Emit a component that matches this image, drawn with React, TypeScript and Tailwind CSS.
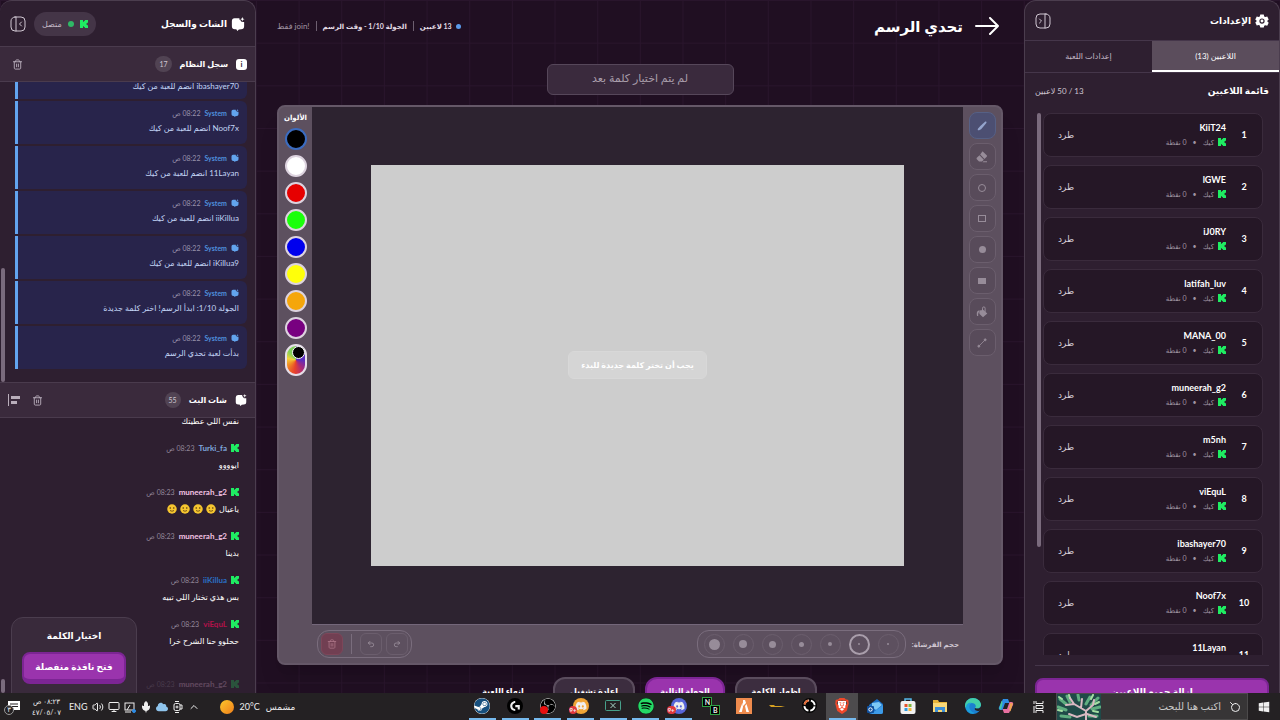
import { useState } from "react";
import type { ReactNode } from "react";
import {
  LuChevronUp,
  LuMic,
  LuMonitor,
  LuSearch,
  LuTrash2,
  LuUndo2,
  LuRedo2,
  LuVolume2,
} from "react-icons/lu";
import { FaWindows, FaSteam, FaSpotify, FaDiscord, FaCloud } from "react-icons/fa";
import { SiBrave, SiLogitechg, SiObsstudio } from "react-icons/si";

const players = [
  "KiiT24",
  "lGWE",
  "iJ0RY",
  "latifah_luv",
  "MANA_00",
  "muneerah_g2",
  "m5nh",
  "viEquL",
  "ibashayer70",
  "Noof7x",
  "11Layan",
];

const systemLog = [
  "Noof7x انضم للعبة من كيك",
  "11Layan انضم للعبة من كيك",
  "iiKillua انضم للعبة من كيك",
  "iKillua9 انضم للعبة من كيك",
  "الجولة 1/10: ابدأ الرسم! اختر كلمة جديدة",
  "بدأت لعبة تحدي الرسم",
];

const chat = [
  { user: "Turki_fa", color: "text-[#7ea6dd]", text: "ايوووو", smiles: 0 },
  { user: "muneerah_g2", color: "text-[#f3c3e3]", text: "ياعيال", smiles: 4 },
  { user: "muneerah_g2", color: "text-[#f3c3e3]", text: "بدينا", smiles: 0 },
  { user: "iiKillua", color: "text-[#2a6fc4]", text: "بس هذي تختار اللي تبيه", smiles: 0 },
  { user: "viEquL", color: "text-[#b3124a]", text: "ححلوو حنا الشرح خرا", smiles: 0 },
];

const colors = [
  { name: "أسود", bg: "bg-black" },
  { name: "أبيض", bg: "bg-white" },
  { name: "أحمر", bg: "bg-[#e60000]" },
  { name: "أخضر", bg: "bg-[#1aff0a]" },
  { name: "أزرق", bg: "bg-[#0000ee]" },
  { name: "أصفر", bg: "bg-[#ffff0a]" },
  { name: "برتقالي", bg: "bg-[#f5a60a]" },
  { name: "بنفسجي", bg: "bg-[#780080]" },
];

const brushSizes = [
  "size-[2px]",
  "size-[2px]",
  "size-1",
  "size-[5px]",
  "size-[7px]",
  "size-2",
  "size-[11px]",
];

function KickIcon({ className = "size-2" }: { className?: string }) {
  return (
    <svg viewBox="0 0 9 9" className={`shrink-0 fill-[#1fec62] ${className}`} aria-hidden="true">
      <path d="M0 0h3.400v2h1V1h1V0H9v3H8v1H7v1h1v1h1v3H5.400V8h-1V7h-1v2H0z" />
    </svg>
  );
}

function ChatIcon({ className }: { className?: string }) {
  return (
    <svg viewBox="0 0 24 24" className={`shrink-0 ${className}`} fill="currentColor" aria-hidden="true">
      <path d="M6 2h8.500c-.5 2 .3 3 1.700 3.300C16.500 7.500 18 9 22.500 8.500V16a5 5 0 0 1-5 5l-4 .5L11 24l-2-3H6.500a5 5 0 0 1-5-5V7A5 5 0 0 1 6 2z" />
      <path d="M19.500 0l1 2.700 2.700 1-2.700 1-1 2.700-1-2.700-2.700-1 2.700-1z" />
    </svg>
  );
}

function PanelIcon({ flip = false }: { flip?: boolean }) {
  return (
    <svg
      viewBox="0 0 16 16"
      className={flip ? "size-4 -scale-x-100" : "size-4"}
      fill="none"
      stroke="currentColor"
      strokeLinecap="round"
      strokeLinejoin="round"
      aria-hidden="true"
    >
      <rect x="1" y="1" width="14" height="14" rx="4" />
      <path d="M6 1v14M11.500 6l-2 2 2 2" />
    </svg>
  );
}

function Smile() {
  return (
    <svg viewBox="0 0 20 20" className="size-[10px]" role="img" aria-label="ابتسامة">
      <circle cx="10" cy="10" r="9.500" fill="#f6c62f" />
      <circle cx="6.500" cy="8" r="1.600" fill="#5b3c10" />
      <circle cx="13.500" cy="8" r="1.600" fill="#5b3c10" />
      <path d="M6 13q4 3 8 0" stroke="#5b3c10" strokeWidth="1.600" fill="none" />
    </svg>
  );
}

function SettingsPanel() {
  const [tab, setTab] = useState("players");
  const tabClass = (id: string) =>
    tab === id
      ? "flex-1 border-b-2 border-white bg-[#5b4d5c] text-white"
      : "flex-1 border-b-2 border-transparent text-[#c3b8c5]";

  return (
    <aside className="flex w-64 shrink-0 flex-col rounded-t-xl border-x border-t border-[#4b3d4e] bg-[#2e1f30]">
      <header className="flex h-10 shrink-0 items-center justify-between border-b border-[#45364a] px-2.5">
        <h2 className="flex items-center gap-1 text-[9px] font-bold">
          <svg viewBox="0 0 24 24" className="size-3.5" aria-hidden="true">
            <path
              d="M9 1h6l.8 3.300 1.700 1L21 4.300l2.500 5-2.300 2.200v1.500l2.300 2.200-2.500 5-3.500-1-1.700 1L15 23H9l-.8-3.300-1.700-1-3.500 1-2.500-5L2.800 12.500v-1L.5 9.300l2.500-5 3.500 1 1.700-1z"
              fill="#fff"
            />
            <circle cx="12" cy="12" r="3.500" fill="none" stroke="#2e1f30" strokeWidth="2" />
          </svg>
          الإعدادات
        </h2>
        <button type="button" aria-label="إخفاء الإعدادات" className="text-[#cfc6d1]">
          <PanelIcon flip />
        </button>
      </header>
      <div role="tablist" className="flex h-8 shrink-0 border-b border-[#45364a] text-[8px]">
        <button type="button" role="tab" aria-selected={tab === "players"} onClick={() => setTab("players")} className={tabClass("players")}>
          اللاعبين (13)
        </button>
        <button type="button" role="tab" aria-selected={tab === "game"} onClick={() => setTab("game")} className={tabClass("game")}>
          إعدادات اللعبة
        </button>
      </div>
      <div className="flex h-10 shrink-0 items-center justify-between px-2.5 pb-1">
        <h3 className="text-[9px] font-bold">قائمة اللاعبين</h3>
        <span className="text-[8px] text-[#cfc6d1]">13 / 50 لاعبين</span>
      </div>
      <div className="mx-3 flex min-h-0 flex-1 gap-0.5 overflow-hidden">
        <ul className="flex flex-1 flex-col gap-2 pr-1">
          {players.map((name, i) => (
            <li key={name} className="flex h-11 shrink-0 items-center rounded-lg border border-[#3a2b3c] bg-[#251726] px-3 pb-px">
              <span className="w-3 text-center text-[9px] font-bold">{i + 1}</span>
              <div className="mr-3 flex-1">
                <p className="text-[9px] leading-[14px] font-bold">
                  <bdi>{name}</bdi>
                </p>
                <p className="flex items-center gap-1 text-[7px] leading-[14px] text-[#a095a2]">
                  <KickIcon />
                  كيك
                  <span className="mx-0.5">•</span>
                  0 نقطة
                </p>
              </div>
              <button type="button" className="px-0.5 text-[9px] text-[#d8cfd9]">
                طرد
              </button>
            </li>
          ))}
        </ul>
        <div className="w-1 shrink-0">
          <div className="h-4/5 rounded-full bg-[#7a6b7d]" />
        </div>
      </div>
      <footer className="mx-2.5 mt-2.5 h-7 shrink-0 border-t border-[#45364a] pt-[11px]">
        <button type="button" className="h-7 w-full rounded-lg border-2 border-[#7c2594] bg-[#9a34ad] text-[9px] font-bold">
          إزالة جميع اللاعبين
        </button>
      </footer>
    </aside>
  );
}

function SectionHead({ icon, title, count, children }: { icon: ReactNode; title: string; count: number; children: ReactNode }) {
  return (
    <header className="flex h-9 shrink-0 items-center gap-2 border-y border-[#4a3b4d] bg-[#3a2a3c] px-2">
      {icon}
      <h3 className="text-[8px] font-bold">{title}</h3>
      <span className="flex h-4 min-w-4 items-center justify-center rounded-full bg-[#514353] px-1 text-[7px] text-[#cfc6d1]">{count}</span>
      <div className="mr-auto flex items-center gap-3 text-[#b9aebb]">{children}</div>
    </header>
  );
}

function ChatPanel() {
  return (
    <aside className="relative flex w-64 shrink-0 flex-col rounded-t-xl border-t border-r border-[#4b3d4e] bg-[#2e1f30]">
      <header className="flex h-[45px] shrink-0 items-center justify-between px-2.5">
        <h2 className="flex items-center gap-1 text-[9px] font-bold">
          <ChatIcon className="size-[14px]" />
          الشات والسجل
        </h2>
        <div className="flex items-center gap-2">
          <span className="flex h-6 items-center gap-1.5 rounded-full bg-[#443547] px-2 text-[8px] text-[#c3b8c5]">
            <KickIcon />
            <span className="size-1.5 rounded-full bg-[#2fb866]" />
            متصل
          </span>
          <button type="button" aria-label="إخفاء الشات" className="text-[#cfc6d1]">
            <PanelIcon />
          </button>
        </div>
      </header>

      <SectionHead
        icon={<span className="flex size-[11px] items-center justify-center rounded-[3px] bg-white text-[8px] font-bold text-[#3a2a3c]">i</span>}
        title="سجل النظام"
        count={17}
      >
        <button type="button" aria-label="مسح السجل" className="ml-1">
          <LuTrash2 className="size-[11px]" />
        </button>
      </SectionHead>
      <div className="flex h-[300px] shrink-0">
        <ul className="flex flex-1 flex-col justify-end gap-0.5 overflow-hidden pr-2 pb-[13px] pl-2.5">
          <li className="h-5 shrink-0 rounded-br-md border-l-[3px] border-[#62a4ee] bg-[#28244b] pr-2 text-[8px] leading-[14px] text-[#c3d5f6]">
            ibashayer70 انضم للعبة من كيك
          </li>
          {systemLog.map((text) => (
            <li key={text} className="h-[43px] shrink-0 rounded-r-md border-l-[3px] border-[#62a4ee] bg-[#28244b] pt-1.5 pr-2">
              <p className="flex items-center gap-1 text-[7px] leading-3 text-[#9a93ad]">
                <ChatIcon className="size-2 text-[#62a4ee]" />
                <span className="font-bold text-[#4f8fdc]">System</span>
                08:22 ص
              </p>
              <p className="pt-0.5 text-[8px] leading-[14px] text-[#c3d5f6]">{text}</p>
            </li>
          ))}
        </ul>
        <div className="flex w-[5px] shrink-0 flex-col justify-end pl-px">
          <div className="h-[38%] rounded-full bg-[#7a6b7d]" />
        </div>
      </div>

      <SectionHead icon={<ChatIcon className="size-3" />} title="شات البث" count={55}>
        <button type="button" aria-label="مسح الشات">
          <LuTrash2 className="size-[11px]" />
        </button>
        <button type="button" aria-label="محاذاة">
          <svg viewBox="0 0 12 12" className="size-3" fill="currentColor" aria-hidden="true">
            <path d="M0 0h1v12H0zM3 2h9v3H3zM3 7h6v3H3z" />
          </svg>
        </button>
      </SectionHead>
      <div className="flex min-h-0 flex-1">
        <ul className="flex flex-1 flex-col overflow-hidden pr-4">
          <li className="-mt-1 h-6 shrink-0 text-[8px] leading-[14px]">نفس اللي عطيتك</li>
          {chat.map((m, i) => (
            <li key={i} className="h-11 shrink-0">
              <p className="flex items-center gap-1 pt-1 text-[7px] leading-3 text-[#93879a]">
                <KickIcon />
                <span className={`text-[8px] font-bold ${m.color}`}>{m.user}</span>
                08:23 ص
              </p>
              <p className="flex items-center gap-[3px] pt-1 text-[8px] leading-[14px] text-white">
                {m.text}
                {Array.from({ length: m.smiles }, (_, n) => (
                  <Smile key={n} />
                ))}
              </p>
            </li>
          ))}
          <li className="shrink-0 pt-5 opacity-25">
            <p className="flex items-center gap-1 text-[7px] leading-3 text-[#93879a]">
              <KickIcon />
              <span className="text-[8px] font-bold text-[#f3c3e3]">muneerah_g2</span>
              08:23 ص
            </p>
          </li>
        </ul>
        <div className="flex w-[5px] shrink-0 flex-col justify-end pl-px">
          <div className="h-[5%] rounded-full bg-[#7a6b7d]" />
        </div>
      </div>

      <section className="absolute -bottom-3 left-[11px] w-[126px] rounded-xl border border-[#4b3d4e] bg-[#392a3b] px-2.5 pt-3 pb-4 text-center">
        <h3 className="text-[9px] leading-3 font-bold">اختيار الكلمة</h3>
        <button
          type="button"
          className="mt-2.5 mb-1 h-8 w-full rounded-lg border-2 border-b-[5px] border-[#7c2594] bg-[#9a34ad] text-[9px] font-bold"
        >
          فتح نافذة منفصلة
        </button>
      </section>
    </aside>
  );
}

const tools: { name: string; icon: ReactNode }[] = [
  {
    name: "فرشاة",
    icon: (
      <svg viewBox="0 0 12 12" className="size-2.5" fill="currentColor">
        <path d="M9.600.8c1.400-.6 2.200.4 1.600 1.600L6 8.800C4.500 10.500 3 11.200 1.200 11.200c-.6-.8-.4-1.700.4-2.600L4 6z" />
      </svg>
    ),
  },
  {
    name: "ممحاة",
    icon: (
      <svg viewBox="0 0 12 12" className="size-3" fill="currentColor">
        <path d="M7 .8l3.700 3.500c.5.500.5 1 0 1.500L8.500 8 4.200 3.500 6 .9c.3-.4.700-.4 1-.1zM3.500 4.300L7.800 8.700 6 10.500H3L.8 8.200c-.4-.4-.4-1 0-1.500zM7.500 10.300H11v1H6.500z" />
      </svg>
    ),
  },
  { name: "دائرة", icon: <span className="size-2 rounded-full border border-current" /> },
  { name: "مستطيل", icon: <span className="h-[7px] w-2 border border-current" /> },
  { name: "دائرة ممتلئة", icon: <span className="size-[7px] rounded-full bg-current" /> },
  { name: "مستطيل ممتلئ", icon: <span className="h-1.5 w-2 bg-current" /> },
  {
    name: "تعبئة",
    icon: (
      <svg viewBox="0 0 12 12" className="size-3" fill="currentColor">
        <path d="M3 4.500L7.500 4l3.800 3.500L7 11.200 3.500 8zM2.500 4.500C.8 5 .5 7 1 10h1.200C2 7.500 2.500 6 4 5z" />
        <path d="M6.500 7V2.200a1.300 1.300 0 0 1 2.600 0V6" fill="none" stroke="currentColor" />
      </svg>
    ),
  },
  {
    name: "خط",
    icon: (
      <svg viewBox="0 0 12 12" className="size-2.5" fill="currentColor" stroke="currentColor">
        <path d="M2.500 9.500l7-7" />
        <circle cx="2.200" cy="9.800" r="1.200" />
        <circle cx="9.800" cy="2.200" r="1.200" />
      </svg>
    ),
  },
];

function Board() {
  const [color, setColor] = useState(0);
  const [size, setSize] = useState(1);

  return (
    <section className="flex min-h-0 flex-1 flex-col overflow-hidden rounded-lg border-2 border-[#655868] bg-[#5d505f] shadow-xl">
      <div className="flex min-h-0 flex-1">
        <div className="flex w-[38px] shrink-0 flex-col items-center gap-1 pt-[5px]">
          {tools.map((tool, i) => (
            <button
              key={tool.name}
              type="button"
              aria-label={tool.name}
              className={
                i === 0
                  ? "flex size-[27px] items-center justify-center rounded-lg border border-[#566085] bg-[#4c4f72] text-[#95a5cd]"
                  : "flex size-[27px] items-center justify-center rounded-lg border border-[#6b5e6d] bg-[#584b5a] text-[#978c99]"
              }
            >
              {tool.icon}
            </button>
          ))}
        </div>
        <div className="flex min-w-0 flex-1 items-center justify-center border-b border-[#74677a] bg-[#2d2330]">
          <div className="flex aspect-[4/3] w-[82%] items-center justify-center bg-[#cdcdcd]">
            <p className="flex h-7 items-center rounded-md border border-[#d8d8d8] bg-[#d5d5d5] px-3 text-[8px] font-bold text-white">
              يجب أن تختر كلمة جديدة للبدء
            </p>
          </div>
        </div>
        <div className="flex w-[33px] shrink-0 flex-col items-center gap-[5px] pt-1">
          <h3 className="text-[7px] leading-3 font-bold">الألوان</h3>
          {colors.map((c, i) => (
            <button
              key={c.name}
              type="button"
              aria-label={c.name}
              onClick={() => setColor(i)}
              className={`size-[22px] shrink-0 rounded-full border-2 ${c.bg} ${color === i ? "border-[#3b6cc0]" : "border-[#ddd3df]"}`}
            />
          ))}
          <button
            type="button"
            aria-label="لون مخصص"
            className="flex h-8 w-[22px] shrink-0 justify-start rounded-full border-2 border-[#e6dee8] bg-[conic-gradient(#5a2cc0,#5a2cc0_25%,#a82a7b_40%,#e8412b_52%,#f08a24_65%,#f3d33a_78%,#7fd05a_90%,#7fd05a)]"
          >
            <span className="size-[13px] rounded-full border border-white bg-black" />
          </button>
        </div>
      </div>

      <div className="flex h-[38px] shrink-0 items-center justify-between pr-[42px] pl-[38px]">
        <div className="flex items-center gap-1.5">
          <span className="text-[7px] font-bold text-[#cfc6d1]">حجم الفرشاة:</span>
          <div className="flex h-7 items-center gap-2 rounded-xl border border-[#7a6d7d] px-1.5">
            {brushSizes.map((dot, i) => (
              <button
                key={i}
                type="button"
                aria-label={`حجم ${i + 1}`}
                onClick={() => setSize(i)}
                className={
                  size === i
                    ? "flex size-[21px] items-center justify-center rounded-full border-2 border-[#a99eab]"
                    : "flex size-[21px] items-center justify-center rounded-full border border-[#6b5e6d]"
                }
              >
                <span className={`rounded-full bg-[#978c99] ${dot}`} />
              </button>
            ))}
          </div>
        </div>
        <div className="flex h-7 items-center gap-1 rounded-xl border border-[#7a6d7d] px-[3px] text-[#a99eab]">
          <button type="button" aria-label="إعادة" className="flex size-[22px] items-center justify-center rounded-md border border-[#6b5e6d]">
            <LuRedo2 className="size-2" />
          </button>
          <button type="button" aria-label="تراجع" className="flex size-[22px] items-center justify-center rounded-md border border-[#6b5e6d]">
            <LuUndo2 className="size-2" />
          </button>
          <span className="mx-1 h-5 w-px bg-[#7a6d7d]" />
          <button
            type="button"
            aria-label="مسح اللوحة"
            className="flex size-[22px] items-center justify-center rounded-md border border-[#7d4659] bg-[#713f52] text-[#ab7386]"
          >
            <LuTrash2 className="size-[10px]" />
          </button>
        </div>
      </div>
    </section>
  );
}

function GameArea() {
  const secondary = "h-7 w-[82px] rounded-xl border-2 border-[#5a4c5d] bg-[#3c2d3f] text-[8px] font-bold";

  return (
    <main className="flex min-w-0 flex-1 flex-col px-[21px]">
      <header className="flex h-[52px] shrink-0 items-center justify-between pr-1">
        <h1 className="flex items-center gap-3 text-[15px] font-bold">
          <button type="button" aria-label="رجوع">
            <svg viewBox="0 0 24 18" className="h-[18px] w-6" fill="none" stroke="#fff" strokeWidth="2" strokeLinecap="round" strokeLinejoin="round">
              <path d="M1 9h22M15 1l8 8-8 8" />
            </svg>
          </button>
          تحدي الرسم
        </h1>
        <div className="flex items-center gap-1.5 text-[7px] font-bold text-[#e3dce5]">
          <span className="flex items-center gap-1">
            <span className="size-[5px] rounded-full bg-[#5a9bea]" />
            13 لاعبين
          </span>
          <span className="h-2.5 w-px bg-[#6d5f70]" />
          <span>الجولة 1/10 - وقت الرسم</span>
          <span className="h-2.5 w-px bg-[#6d5f70]" />
          <span className="text-[8px] font-normal text-[#a095a2]">!join فقط</span>
        </div>
      </header>
      <div className="mx-auto mt-3 mb-2.5 flex h-[31px] w-[187px] shrink-0 items-center justify-center rounded-md border border-[#56475a] bg-[#3a2a3d] pb-0.5 text-[11px] text-[#a99eab]">
        لم يتم اختيار كلمة بعد
      </div>
      <Board />
      <div className="mt-3 flex h-4 shrink-0 items-start justify-center gap-2.5">
        <button type="button" className={secondary}>إظهار الكلمة</button>
        <button type="button" className="h-7 w-20 rounded-xl border-2 border-[#7c2594] bg-[#9a34ad] text-[8px] font-bold">الجولة التالية</button>
        <button type="button" className={secondary}>إعادة تشغيل</button>
        <button type="button" className="h-7 w-20 text-[8px] font-bold">إنهاء اللعبة</button>
      </div>
    </main>
  );
}

const apps: { name: string; open?: boolean; active?: boolean; icon: ReactNode }[] = [
  {
    name: "Copilot",
    icon: (
      <svg viewBox="0 0 16 16" className="size-4">
        <path d="M5 1h5l1.500 4H7L4.500 12H2.500C.8 12 .5 10.500 1 9z" fill="#2f8de4" />
        <path d="M4.500 5L3 11.500 1.200 11 3.500 2.500z" fill="#48c9a0" />
        <path d="M11 15H6l-1.500-4H9l2.500-7h2c1.700 0 2 1.500 1.500 3z" fill="#e86fa0" />
        <path d="M11 11l1.500-6 2.300.5L12.500 13.500z" fill="#f0a550" />
      </svg>
    ),
  },
  {
    name: "Edge",
    icon: (
      <svg viewBox="0 0 16 16" className="size-4">
        <circle cx="8" cy="8" r="8" fill="#1b7fd0" />
        <path d="M0 8C0 3 4 0 8 0s8 3 8 7c0 3-4 4-6 3 2-2 0-5-3-5-4 0-5 3-5 6C1 10 0 9 0 8z" fill="#43cfa8" />
        <path d="M7 5c-4 1-4 8 3 10-4 2-9-1-9-6 0-3 3-5 6-4z" fill="#1b9fdc" />
        <path d="M10 10c2 1 5 1 6-2v3l-2 2c-3 0-5-1-4-3z" fill="#262224" />
      </svg>
    ),
  },
  {
    name: "Files",
    icon: (
      <svg viewBox="0 0 16 16" className="size-4">
        <path d="M1 2h5l1 2h8v10H1z" fill="#e7b43a" />
        <path d="M1 5h14v9H1z" fill="#f9d878" />
        <path d="M3 9h10v5h-3v-2H6v2H3z" fill="#3d8fd6" />
      </svg>
    ),
  },
  {
    name: "Store",
    icon: (
      <svg viewBox="0 0 16 16" className="size-4">
        <path d="M5 4V1h6v3" fill="none" stroke="#55b8ea" strokeWidth="1.500" />
        <rect x="0.500" y="3" width="15" height="13" rx="2" fill="#f1f1f1" />
        <path d="M4.500 6h3v3h-3z" fill="#e5532d" />
        <path d="M8.500 6h3v3h-3z" fill="#7db83c" />
        <path d="M4.500 10h3v3h-3z" fill="#2f9be0" />
        <path d="M8.500 10h3v3h-3z" fill="#f2b83a" />
      </svg>
    ),
  },
  {
    name: "Outlook",
    icon: (
      <svg viewBox="0 0 16 16" className="size-4">
        <path d="M2 7l8-6 6 5v8a2 2 0 0 1-2 2H4a2 2 0 0 1-2-2z" fill="#1b6fc4" />
        <path d="M5 5l7-1 3 3-6 5-4-3z" fill="#7cc8f5" />
        <path d="M16 7v7a2 2 0 0 1-2 2H4z" fill="#3d9be8" />
        <rect y="8" width="7" height="7" rx="1" fill="#0f4f9c" />
        <circle cx="3.500" cy="11.500" r="1.700" fill="none" stroke="#fff" />
      </svg>
    ),
  },
  {
    name: "Brave",
    open: true,
    active: true,
    icon: (
      <span className="relative flex size-4 items-center justify-center">
        <span className="absolute h-2.5 w-2 bg-white" />
        <SiBrave className="relative size-4 text-[#f0482a]" />
      </span>
    ),
  },
  {
    name: "Aim",
    icon: (
      <svg viewBox="0 0 16 16" className="size-[15px]">
        <circle cx="8" cy="8" r="8" fill="#050505" />
        <circle cx="8" cy="8" r="5.500" fill="none" stroke="#fff" strokeWidth="2" strokeDasharray="6.600 2" strokeDashoffset="-1" />
        <path d="M2.700 7A5.500 5.500 0 0 1 7 2.700" stroke="#e36a35" strokeWidth="2" fill="none" />
      </svg>
    ),
  },
  {
    name: "Launcher",
    icon: (
      <svg viewBox="0 0 16 4" className="h-1 w-4">
        <path d="M0 1h5l1 1h10l-4 1H2z" fill="#d5a022" />
      </svg>
    ),
  },
  {
    name: "FiveM",
    icon: (
      <svg viewBox="0 0 16 16" className="size-4">
        <path d="M0 0h16v16H0z" fill="#ee8b4d" />
        <path d="M7 2h2l1 3-3 3zM6.500 4.500L3 14h2.800L7 9zM9 8l1.300 6H13l-2.500-8z" fill="#fff" />
      </svg>
    ),
  },
  {
    name: "NB",
    icon: (
      <span dir="ltr" className="flex size-4 flex-col text-[7px] leading-2 font-bold">
        <span className="size-2 bg-black text-center outline outline-[#2fa043]">N</span>
        <span className="size-2 self-end bg-black text-center outline outline-[#2fa043]">B</span>
      </span>
    ),
  },
  {
    name: "Discord",
    open: true,
    icon: (
      <Badged>
        <span className="flex size-4 items-center justify-center rounded-full bg-[#5865d8]">
          <FaDiscord className="size-3" />
        </span>
      </Badged>
    ),
  },
  {
    name: "Spotify",
    open: true,
    icon: (
      <span className="rounded-full bg-black">
        <FaSpotify className="size-4 text-[#25d865]" />
      </span>
    ),
  },
  {
    name: "X",
    open: true,
    icon: (
      <svg viewBox="0 0 16 11" className="h-[11px] w-4" fill="none" stroke="#47a08a">
        <rect x="0.500" y="0.500" width="15" height="10" rx="1" />
        <path d="M5.500 3l5 5M10.500 3l-5 5" stroke="#a9d5c8" />
      </svg>
    ),
  },
  {
    name: "Discord Canary",
    open: true,
    icon: (
      <Badged>
        <span className="flex size-4 items-center justify-center rounded-full bg-[#f0a536]">
          <FaDiscord className="size-3" />
        </span>
      </Badged>
    ),
  },
  {
    name: "OBS",
    open: true,
    icon: (
      <span className="relative block size-4">
        <SiObsstudio className="size-4 rounded-full bg-black text-[#c9c9c9]" />
        <span className="absolute bottom-0 left-0 size-2 rounded-full bg-[#e80f0f]" />
      </span>
    ),
  },
  {
    name: "G Hub",
    open: true,
    icon: (
      <span className="flex size-4 items-center justify-center rounded-full bg-black">
        <SiLogitechg className="size-2.5" />
      </span>
    ),
  },
  {
    name: "Steam",
    open: true,
    icon: <FaSteam className="size-4 rounded-full bg-white text-[#17507f]" />,
  },
];

function Badged({ children }: { children: ReactNode }) {
  return (
    <span className="relative block">
      {children}
      <span dir="ltr" className="absolute bottom-0 -left-1 rounded-full bg-[#e0383e] px-px text-[6px] leading-2 font-bold">
        9+
      </span>
    </span>
  );
}

function Coral() {
  return (
    <svg viewBox="0 0 44 26" className="h-[26px] w-11 shrink-0" aria-hidden="true">
      <rect width="44" height="26" fill="#1f4a48" />
      <g fill="none" stroke="#5fae80" strokeWidth="3" strokeLinecap="round">
        <path d="M3 5l6 5M10 2l3 6M1 13l8 3M33 3l-4 7M41 4l-7 7M43 13l-8 2M4 22l9 1M40 22l-8 0M21 1l1 5" />
      </g>
      <g fill="none" stroke="#a5dfa3" strokeWidth="2" strokeLinecap="round">
        <path d="M2 3l3 2M12 1l1 3M36 1l-2 4M42 8l-4 2M1 16l4 1M41 18l-5-1" />
      </g>
      <g fill="none" stroke="#d9b9c2" strokeWidth="2" strokeLinecap="round">
        <path d="M29 26V17L17 10 9 11M29 17l7-6 1-5M24 14l1-9M17 10l-4-6M29 20l-9 3-8-3M30 20l9 3" />
      </g>
    </svg>
  );
}

function Taskbar() {
  return (
    <footer className="flex h-[27px] shrink-0 items-stretch bg-[#242123] text-[#efefef]">
      <button type="button" aria-label="ابدأ" className="flex w-8 items-center justify-center">
        <FaWindows className="size-3" />
      </button>
      <label className="flex w-48 items-center gap-2 border border-[#4c4a4b] bg-[#373536] pr-1.5">
        <LuSearch className="size-3 -scale-x-100 rotate-90" />
        <input type="text" aria-label="بحث" placeholder="اكتب هنا للبحث" className="min-w-0 flex-1 bg-transparent text-[10px] placeholder:text-[#c9c9c9]" />
        <Coral />
      </label>
      <button type="button" aria-label="عرض المهام" className="flex w-[34px] items-center justify-center">
        <svg viewBox="0 0 12 12" className="size-3" fill="none" stroke="currentColor">
          <path d="M3 0v2.500h7V0M3 12V9.500h7V12M3 4.500h7v3H3zM1 0v3M1 5v7" />
        </svg>
      </button>
      <nav className="flex w-[556px]">
        {apps.map((app) => (
          <button
            key={app.name}
            type="button"
            aria-label={app.name}
            className={`flex flex-1 flex-col items-center ${app.active ? "bg-[#4d4b4d]" : ""}`}
          >
            <span className="flex flex-1 items-center justify-center">{app.icon}</span>
            <span className={`h-0.5 w-[27px] ${app.open ? "bg-[#76b9ed]" : ""}`} />
          </button>
        ))}
      </nav>
      <div className="mr-auto flex items-center gap-1.5 pl-5 text-[9px]">
        <span>مشمس</span>
        <span dir="ltr">20°C</span>
        <span className="size-3.5 rounded-full bg-linear-to-br from-[#fbc72c] to-[#ee7d1b]" />
      </div>
      <div className="flex items-center gap-1 pl-2">
        <LuChevronUp className="size-3" />
        <svg viewBox="0 0 12 12" className="size-3" fill="none" stroke="currentColor">
          <rect x="2" y="2.500" width="6" height="7" rx="1.500" />
          <path d="M3 .5h4M3 11.500h4M8 4h2v4H8" />
          <circle cx="5" cy="6" r="1" />
        </svg>
        <FaCloud className="size-3 text-[#8fc4ec]" />
        <LuMic className="size-3 fill-current" />
        <svg viewBox="0 0 12 12" className="size-3" fill="none" stroke="currentColor">
          <rect x="1" y="2" width="9" height="7" />
          <path d="M3 9l3-5M1 11h6" />
          <circle cx="10" cy="10" r="1.500" fill="#2f8de4" stroke="#2f8de4" />
        </svg>
        <LuMonitor className="size-3" />
        <LuVolume2 className="size-3" />
        <span className="text-[9px]">ENG</span>
        <div className="mr-1 ml-2 text-center text-[7px] leading-[11px]">
          <p>٠٨:٢٣ ص</p>
          <p dir="ltr">٤٧/٠٥/٠٧</p>
        </div>
        <span className="relative">
          <svg viewBox="0 0 12 12" className="size-3" fill="#fff" aria-hidden="true">
            <path d="M0 0h12v9H6l-3 3V9H0z" />
            <path d="M2 3h8M2 5.500h8" stroke="#242123" />
          </svg>
          <span className="absolute top-1 -left-1 flex size-2.5 items-center justify-center rounded-full border border-[#9a9a9a] bg-[#242123] text-[7px]">٣</span>
        </span>
      </div>
    </footer>
  );
}

export default function App() {
  return (
    <div
      dir="rtl"
      className="flex h-screen flex-col overflow-hidden bg-[#200f22] font-['Lato','DejaVu_Sans',sans-serif] text-white"
    >
      <div className="flex min-h-0 flex-1 overflow-hidden bg-[linear-gradient(#29152c_1px,transparent_1px),linear-gradient(90deg,#29152c_1px,transparent_1px)] bg-[size:calc(100vw/30)_calc(100vw/30)]">
        <SettingsPanel />
        <GameArea />
        <ChatPanel />
      </div>
      <Taskbar />
    </div>
  );
}
